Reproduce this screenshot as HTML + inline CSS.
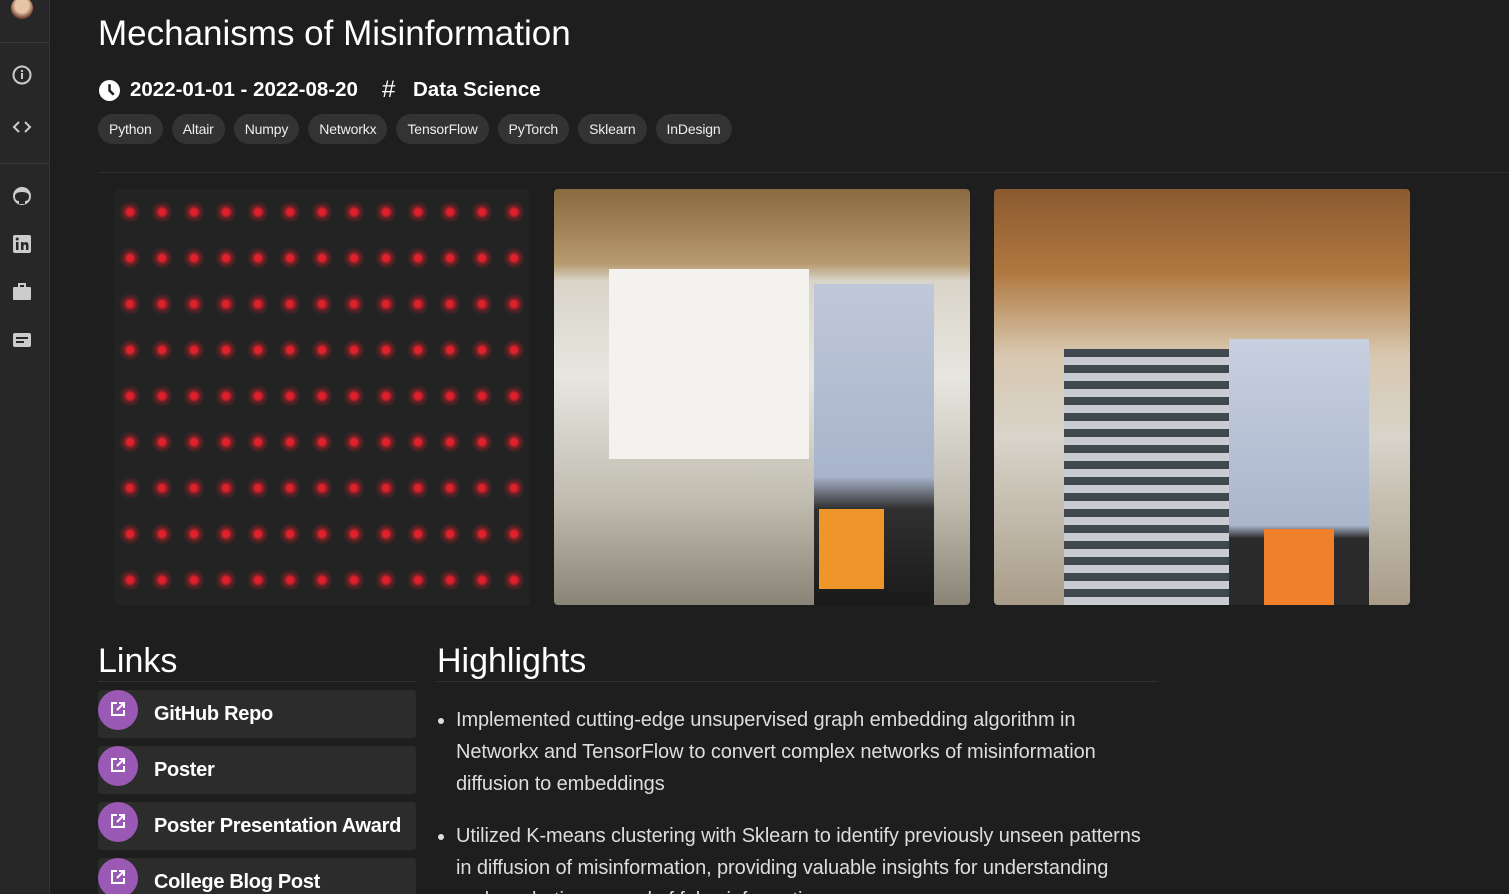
<!DOCTYPE html><html style="overflow:hidden;height:894px"><head><style>
body{margin:0;width:1509px;height:894px;overflow:hidden;background:#1e1e1e;font-family:"Liberation Sans",sans-serif;color:#fff;position:relative}
.side{position:absolute;left:0;top:0;width:49px;height:894px;background:#272727;border-right:1px solid #333}
.side .sep{position:absolute;left:0;width:49px;height:1px;background:#3a3a3a}
.ic{position:absolute;left:12px;width:20px;height:20px}
h1{position:absolute;left:98px;top:14px;margin:0;font-weight:400;font-size:35px}
.meta{position:absolute;top:78px;font-size:20.5px;font-weight:bold}
.chips{position:absolute;left:98px;top:114px;display:flex;gap:9px}
.chip{background:#333;border-radius:16px;height:30px;line-height:30px;padding:0 11px;font-size:14px;color:#eee;letter-spacing:-0.15px}
.hr{position:absolute;left:98px;top:172px;width:1411px;height:1px;background:#2d2d2d}
.img{position:absolute;top:189px;width:416px;height:416px;border-radius:4px;overflow:hidden}
h2{position:absolute;margin:0;font-weight:400;font-size:34px;top:642px}
.link{position:absolute;left:98px;width:318px;height:48px;background:#2c2c2c;border-radius:3px;overflow:hidden}
.link .c{position:absolute;left:0;top:0;width:40px;height:40px;border-radius:50%;background:#9b59b6}
.link .c svg{position:absolute;left:13px;top:12px}
.link span{position:absolute;left:56px;top:13px;font-size:20px;font-weight:bold;letter-spacing:-0.3px}
ul{position:absolute;left:437px;top:704px;margin:0;padding-left:19px;width:760px;font-size:20px;line-height:32px;color:#ddd;letter-spacing:-0.1px;white-space:nowrap}
li{margin-bottom:20px}
</style></head><body>
<div class="side">
<div style="position:absolute;left:11px;top:-3px;width:22px;height:22px;border-radius:50%;background:radial-gradient(circle at 50% 40%,#e8c4a6 40%,#7a4a3a 70%)"></div>
<div class="sep" style="top:42px"></div>
<svg class="ic" style="top:65px" viewBox="0 0 20 20"><circle cx="10" cy="10" r="8.5" fill="none" stroke="#ccc" stroke-width="2"/><rect x="9" y="8" width="2" height="6" fill="#ccc"/><rect x="9" y="5" width="2" height="2" fill="#ccc"/></svg>
<svg class="ic" style="top:117px" viewBox="0 0 20 20"><path d="M7 5L2 10l5 5M13 5l5 5-5 5" fill="none" stroke="#ccc" stroke-width="2"/></svg>
<div class="sep" style="top:163px"></div>
<svg class="ic" style="top:186px" viewBox="0 0 20 20"><circle cx="10" cy="10" r="9" fill="#ccc"/><path d="M7 18v-3c-3 0-4-2-4-5 0-2 2-4 7-4s7 2 7 4c0 3-1 5-4 5v3z" fill="#272727"/></svg>
<svg class="ic" style="top:234px" viewBox="0 0 20 20"><rect x="1" y="1" width="18" height="18" rx="2" fill="#ccc"/><rect x="4" y="8" width="2.5" height="8" fill="#272727"/><circle cx="5.2" cy="5" r="1.5" fill="#272727"/><path d="M9 16V8h2.5v1.5c1-2 5-2 5 1.5V16h-2.5v-4c0-2-2.5-2-2.5 0v4z" fill="#272727"/></svg>
<svg class="ic" style="top:282px" viewBox="0 0 20 20"><rect x="1" y="5" width="18" height="13" rx="1" fill="#ccc"/><rect x="7" y="2" width="6" height="4" fill="none" stroke="#ccc" stroke-width="2"/></svg>
<svg class="ic" style="top:330px" viewBox="0 0 20 20"><rect x="1" y="3" width="18" height="14" rx="2" fill="#ccc"/><rect x="4" y="7" width="12" height="2" fill="#272727"/><rect x="4" y="11" width="8" height="2" fill="#272727"/></svg>
</div>
<h1>Mechanisms of Misinformation</h1>
<svg style="position:absolute;left:99px;top:80px" width="21" height="21" viewBox="0 0 20 20"><circle cx="10" cy="10" r="10" fill="#fff"/><path d="M10 4v6l4 4" stroke="#1e1e1e" stroke-width="2.4" fill="none"/></svg>
<div class="meta" style="left:130px">2022-01-01 - 2022-08-20</div>
<div class="meta" style="left:382px;font-weight:400;font-size:24px;top:76px">#</div>
<div class="meta" style="left:413px">Data Science</div>
<div class="chips"><div class="chip">Python</div><div class="chip">Altair</div><div class="chip">Numpy</div><div class="chip">Networkx</div><div class="chip">TensorFlow</div><div class="chip">PyTorch</div><div class="chip">Sklearn</div><div class="chip">InDesign</div></div>
<div class="hr"></div>
<div class="img" style="left:114px;background:#232323 radial-gradient(circle,#e0202a 3px,rgba(224,32,42,.35) 6px,transparent 11px) 0 0/32px 46px"></div>
<div class="img" style="left:554px;background:linear-gradient(180deg,#8a6a40 0%,#b89a70 18%,#d8d4c8 22%,#e8e6e0 45%,#c0bcb0 75%,#8a8478 100%)"><div style="position:absolute;left:55px;top:80px;width:200px;height:190px;background:#f4f2ee"></div><div style="position:absolute;left:260px;top:95px;width:120px;height:321px;background:linear-gradient(#c0c8d8,#a8b4cc 60%,#303030 70%,#1a1a1a)"></div><div style="position:absolute;left:265px;top:320px;width:65px;height:80px;background:#f0952a"></div></div>
<div class="img" style="left:994px;background:linear-gradient(180deg,#8a5a30 0%,#b07840 20%,#d8c8b0 40%,#d8d4ca 60%,#a89c88 100%)"><div style="position:absolute;left:70px;top:160px;width:180px;height:256px;background:repeating-linear-gradient(#404850 0 8px,#c8ccd0 8px 16px)"></div><div style="position:absolute;left:235px;top:150px;width:140px;height:266px;background:linear-gradient(#c8d0e0,#aab6cc 70%,#2a2a2a 75%)"></div><div style="position:absolute;left:270px;top:340px;width:70px;height:76px;background:#f0802a"></div></div>
<h2 style="left:98px">Links</h2><div style="position:absolute;left:98px;top:681px;width:318px;height:1px;background:#333"></div>
<h2 style="left:437px">Highlights</h2><div style="position:absolute;left:437px;top:681px;width:720px;height:1px;background:#333"></div>
<div class="link" style="top:690px"><div class="c"><svg width="14" height="14" viewBox="0 0 14 14"><path d="M6 1H1v12h12V8M8 1h5v5M13 1L6 8" fill="none" stroke="#fff" stroke-width="2"/></svg></div><span>GitHub Repo</span></div>
<div class="link" style="top:746px"><div class="c"><svg width="14" height="14" viewBox="0 0 14 14"><path d="M6 1H1v12h12V8M8 1h5v5M13 1L6 8" fill="none" stroke="#fff" stroke-width="2"/></svg></div><span>Poster</span></div>
<div class="link" style="top:802px"><div class="c"><svg width="14" height="14" viewBox="0 0 14 14"><path d="M6 1H1v12h12V8M8 1h5v5M13 1L6 8" fill="none" stroke="#fff" stroke-width="2"/></svg></div><span>Poster Presentation Award</span></div>
<div class="link" style="top:858px"><div class="c"><svg width="14" height="14" viewBox="0 0 14 14"><path d="M6 1H1v12h12V8M8 1h5v5M13 1L6 8" fill="none" stroke="#fff" stroke-width="2"/></svg></div><span>College Blog Post</span></div>
<ul><li>Implemented cutting-edge unsupervised graph embedding algorithm in<br>Networkx and TensorFlow to convert complex networks of misinformation<br>diffusion to embeddings</li><li>Utilized K-means clustering with Sklearn to identify previously unseen patterns<br>in diffusion of misinformation, providing valuable insights for understanding<br>and combating spread of false information</li></ul>
</body></html>
